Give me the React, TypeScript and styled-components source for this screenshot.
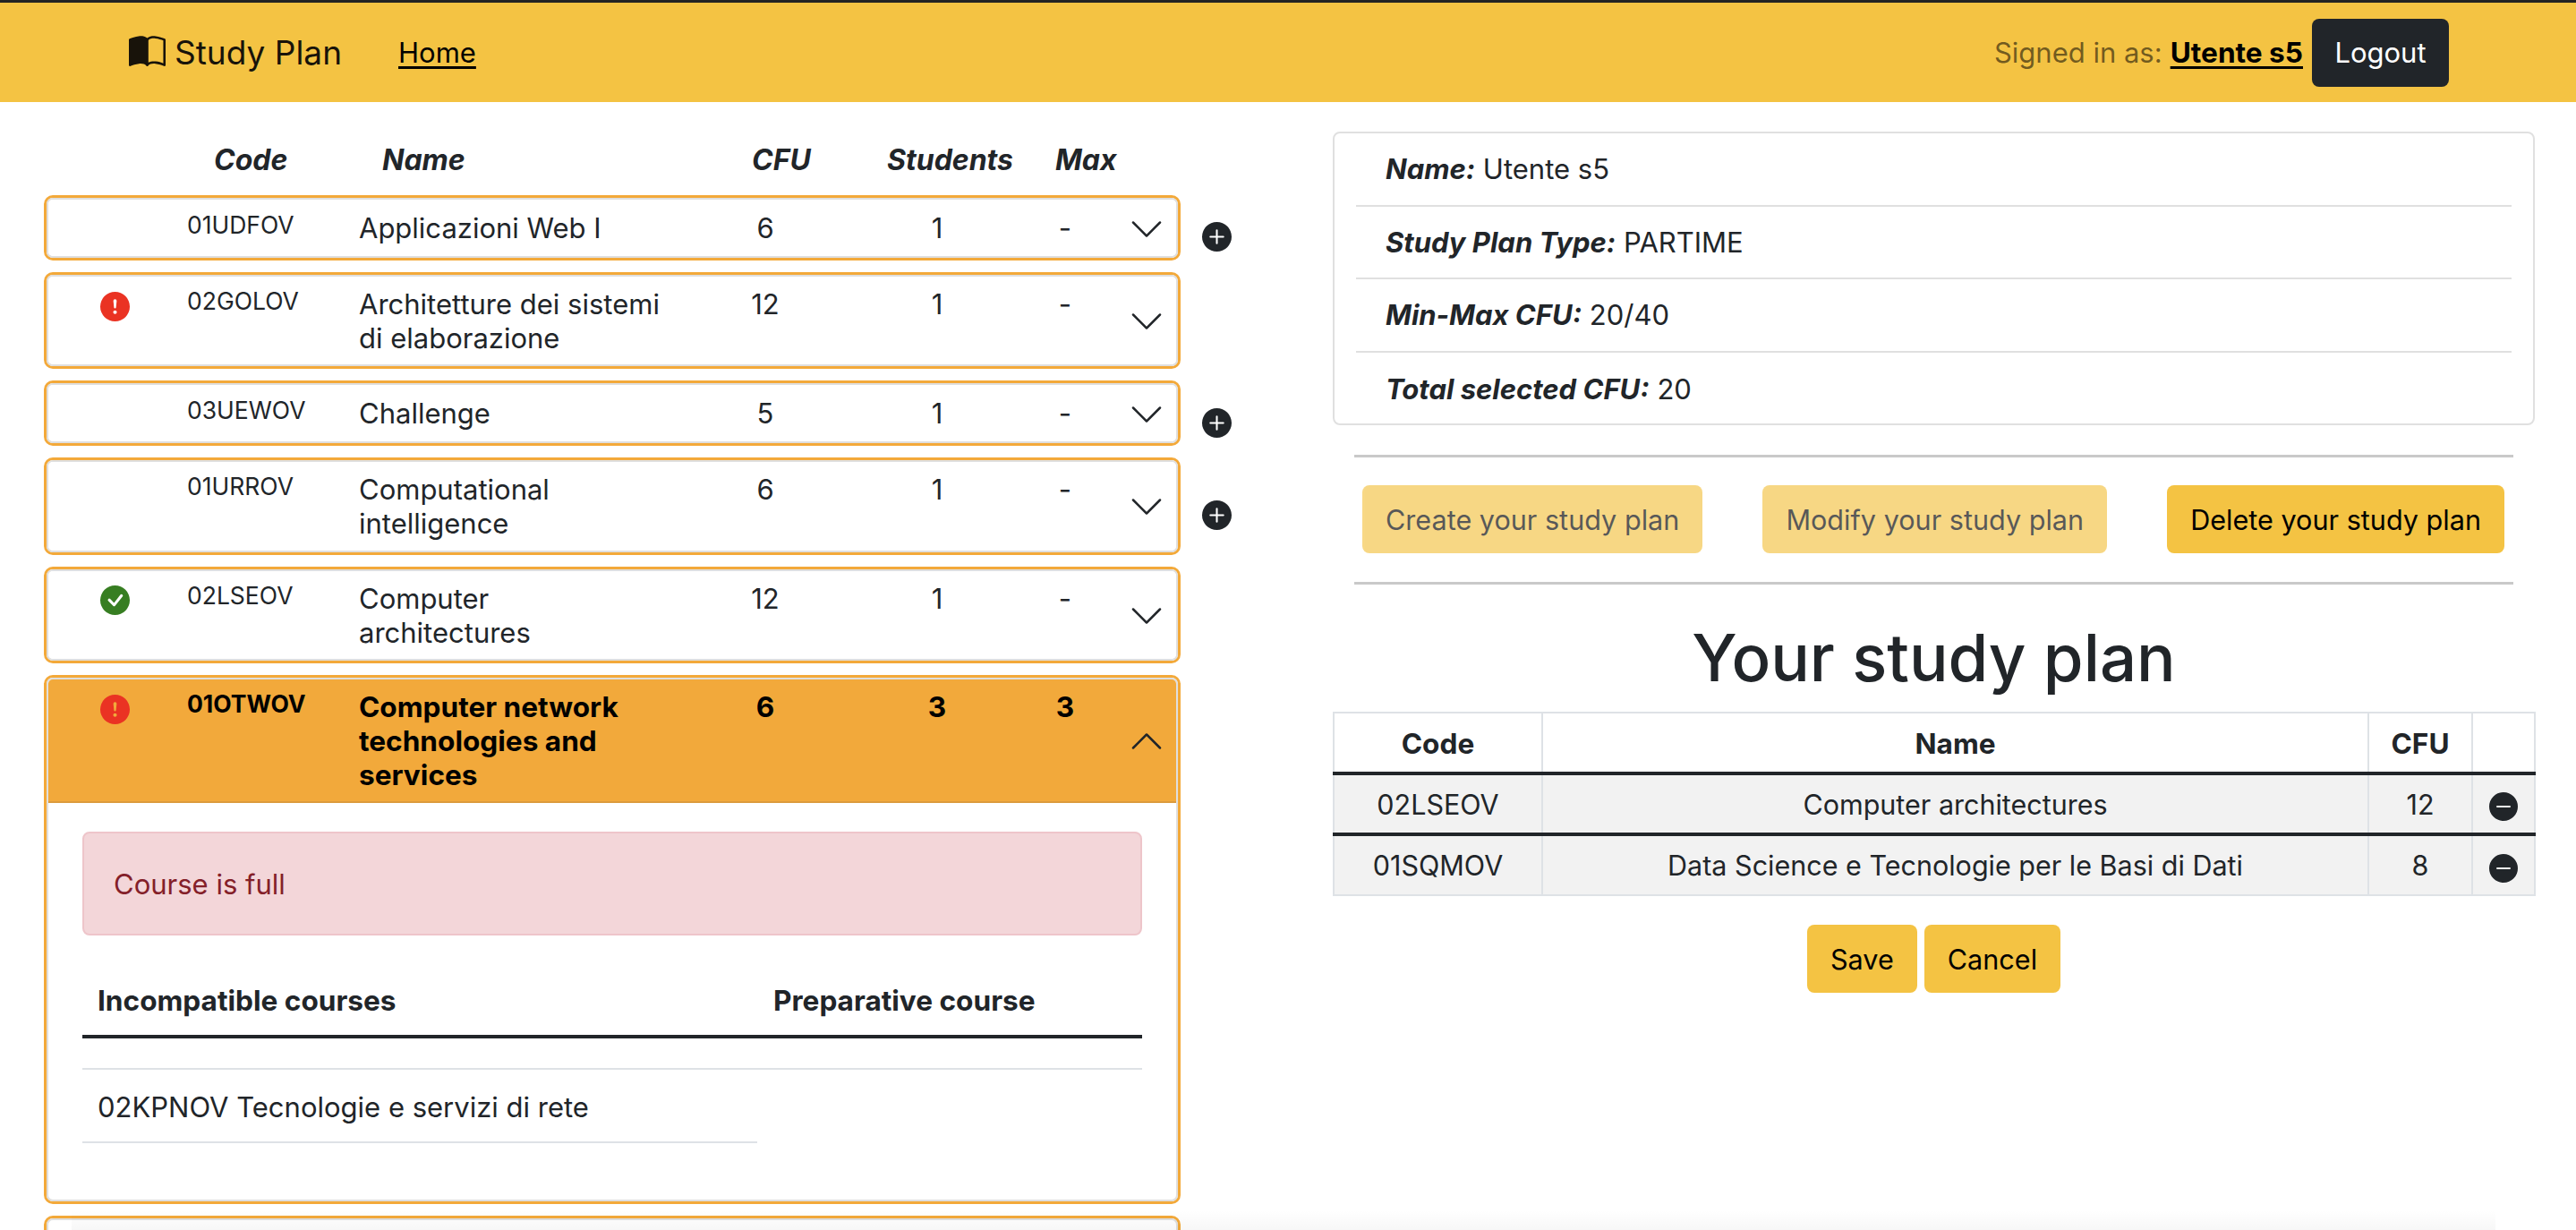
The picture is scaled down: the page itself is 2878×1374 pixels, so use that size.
import React from "react";
import styled, { createGlobalStyle } from "styled-components";
import {
  BsBookHalf,
  BsCheckCircleFill,
  BsChevronDown,
  BsChevronUp,
  BsDashCircleFill,
  BsExclamationCircleFill,
  BsPlusCircleFill,
} from "react-icons/bs";

const Global = createGlobalStyle`
  html, body { margin: 0; padding: 0; background: #fff; }
  body { font-family: Inter, "Liberation Sans", sans-serif; font-size: 31px; color: #212529; }
  * { box-sizing: border-box; }
`;

const Page = styled.div`
  position: relative;
  height: 1374px;
  overflow: hidden;
  background: #fff;
`;

const BottomFade = styled.div`
  position: absolute;
  left: 80px;
  right: 90px;
  bottom: 0;
  height: 22px;
  pointer-events: none;
  background: linear-gradient(to bottom, rgba(0, 0, 0, 0), rgba(0, 0, 0, 0.03));
`;

const Navbar = styled.header`
  display: flex;
  align-items: center;
  height: 114px;
  padding: 0 142px 0 144px;
  border-top: 3px solid #232323;
  background: #f4c343;
`;

const Brand = styled.div`
  display: flex;
  align-items: center;
  gap: 10px;
  font-size: 37px;
  color: #18130a;
  svg { width: 41px; height: 41px; }
`;

const NavLink = styled.a`
  margin-left: 63px;
  color: #000;
  text-decoration: underline;
  text-underline-offset: 4px;
`;

const NavRight = styled.div`
  margin-left: auto;
  display: flex;
  align-items: center;
`;

const SignedIn = styled.span`
  color: rgba(0, 0, 0, 0.55);
`;

const UserLink = styled.a`
  margin-left: 9px;
  color: #000;
  font-size: 31.6px;
  font-weight: 700;
  text-decoration: underline;
  text-underline-offset: 4px;
`;

const LogoutButton = styled.button`
  margin-left: 10px;
  width: 153px;
  height: 76px;
  border: 0;
  border-radius: 8px;
  background: #212529;
  color: #fff;
  font: inherit;
`;

const Main = styled.main`
  display: flex;
  align-items: flex-start;
  padding-left: 49px;
`;

const CourseColumn = styled.section`
  width: 1327px;
  flex: none;
`;

const ListHead = styled.div`
  display: grid;
  grid-template-columns: 188px 413px 151px 188px 80px;
  align-items: center;
  height: 104px;
  padding: 24px 0 0 190px;
  font-size: 32px;
  font-style: italic;
  strong { font-weight: 700; }
`;

const CourseRow = styled.div`
  display: flex;
  align-items: center;
  gap: 24px;
  margin-bottom: 12.8px;
`;

const Card = styled.article`
  width: 1270px;
  flex: none;
  border: 3px solid #f3a93a;
  border-radius: 10px;
  background: #fff;
`;

const CardInner = styled.div`
  border: 2px solid #dfdfdf;
  border-radius: 7px;
  overflow: hidden;
`;

const CourseHead = styled.div<{ $open?: boolean }>`
  display: grid;
  grid-template-columns: 149px 198px 359px 190px 194px 92px 1fr;
  min-height: 62.9px;
  padding: ${(p) => (p.$open ? "12px 0 10px" : "12.5px 0 10.3px")};
  line-height: 38px;
  background: ${(p) => (p.$open ? "#f2a93b" : "#fff")};
  border-bottom: ${(p) => (p.$open ? "2px solid #dc9b3c" : "0")};
  color: ${(p) => (p.$open ? "#000" : "#212529")};
  font-size: ${(p) => (p.$open ? "31.6px" : "31px")};
  font-weight: ${(p) => (p.$open ? 700 : 400)};
`;

const StatusCell = styled.div<{ $ok?: boolean }>`
  display: flex;
  justify-content: center;
  padding-top: ${(p) => (p.$ok ? "3.5px" : "4.5px")};
  color: ${(p) => (p.$ok ? "#377e22" : "#ea3323")};
  svg { width: 33px; height: 33px; }
`;

const CodeCell = styled.div`
  padding-left: 6px;
  font-size: 26.5px;
  line-height: 30px;
`;

const NameCell = styled.div`
  width: 342px;
`;

const ValueCell = styled.div`
  text-align: center;
`;

const ChevronCell = styled.div`
  justify-self: end;
  align-self: center;
  display: flex;
  margin-right: 13px;
  color: #212529;
  svg { width: 40px; height: 40px; }
`;

const AddSlot = styled.div`
  display: flex;
  width: 33px;
  height: 33px;
  margin-top: 21px;
  color: #212529;
  svg { width: 33px; height: 33px; }
`;

const CourseBody = styled.div`
  padding: 32px 38px 63px;
`;

const Alert = styled.div`
  display: flex;
  align-items: center;
  height: 116px;
  padding: 0 33px;
  border: 2px solid #eec5ca;
  border-radius: 8px;
  background: #f3d6d9;
  color: #842029;
`;

const DetailHead = styled.div`
  display: grid;
  grid-template-columns: 755px 1fr;
  align-items: center;
  height: 115px;
  padding: 34px 0 0 17px;
  border-bottom: 4px solid #212529;
  font-size: 31.6px;
  span { font-weight: 700; }
`;

const DetailSpacer = styled.div`
  height: 35px;
  border-bottom: 2px solid #dee2e6;
`;

const DetailItem = styled.div`
  display: flex;
  align-items: center;
  width: 754px;
  height: 82px;
  padding: 2px 0 0 17px;
  border-bottom: 2px solid #dee2e6;
`;

const SideColumn = styled.section`
  width: 1343px;
  margin-left: 113px;
  padding-top: 33px;
`;

const InfoCard = styled.ul`
  list-style: none;
  margin: 0;
  padding: 0 24px;
  height: 328px;
  border: 2px solid #e0e0e0;
  border-radius: 8px;
`;

const InfoItem = styled.li`
  display: flex;
  align-items: center;
  height: 81.6px;
  padding-left: 33px;
  border-bottom: 2px solid #e0e0e0;
  white-space: pre;
  &:last-child { border-bottom: 0; }
  em { font-weight: 700; font-style: italic; }
`;

const Rule = styled.hr`
  height: 3px;
  margin: 0 24px;
  border: 0;
  background: #c9c9c9;
`;

const FirstRule = styled(Rule)`
  margin-top: 33px;
`;

const ActionBar = styled.div`
  display: flex;
  justify-content: space-between;
  margin: 0 24px;
  padding: 31px 10px 32px 9px;
`;

const YellowButton = styled.button<{ $off?: boolean }>`
  height: 76px;
  padding: 0 26px;
  border: 0;
  border-radius: 8px;
  background: #f4c343;
  color: #000;
  font-family: inherit;
  font-size: 30.6px;
  opacity: ${(p) => (p.$off ? 0.65 : 1)};
`;

const Title = styled.h1`
  margin: 0;
  padding-top: 36px;
  height: 142px;
  font-size: 72.5px;
  font-weight: 500;
  line-height: 92px;
  text-align: center;
`;

const PlanTable = styled.table`
  width: 1342px;
  table-layout: fixed;
  border-collapse: collapse;
  text-align: center;
  font-size: 30.5px;
  th, td { border: 2px solid #dee2e6; padding: 0; }
  th { height: 68px; padding-top: 2px; font-size: 31.6px; font-weight: 700; border-bottom: 4px solid #212529; }
  td { height: 68px; background: #f2f2f2; }
  tbody tr:first-child td { border-bottom: 4px solid #212529; }
`;

const RemoveIcon = styled.span`
  display: flex;
  justify-content: center;
  padding-top: 6px;
  color: #212529;
  svg { width: 32px; height: 32px; }
`;

const PlanActions = styled.div`
  display: flex;
  justify-content: center;
  gap: 8px;
  margin-top: 32px;
`;

const NextCardBlank = styled.div`
  min-height: 62.9px;
`;

type Course = {
  code: string;
  name: string;
  cfu: number;
  students: number;
  max: string;
  status?: "ok" | "bad";
  add?: boolean;
};

const courses: Course[] = [
  { code: "01UDFOV", name: "Applicazioni Web I", cfu: 6, students: 1, max: "-", add: true },
  { code: "02GOLOV", name: "Architetture dei sistemi di elaborazione", cfu: 12, students: 1, max: "-", status: "bad" },
  { code: "03UEWOV", name: "Challenge", cfu: 5, students: 1, max: "-", add: true },
  { code: "01URROV", name: "Computational intelligence", cfu: 6, students: 1, max: "-", add: true },
  { code: "02LSEOV", name: "Computer architectures", cfu: 12, students: 1, max: "-", status: "ok" },
];

function HeadCells({ c, open }: { c: Course; open?: boolean }) {
  return (
    <CourseHead $open={open}>
      <StatusCell $ok={c.status === "ok"}>
        {c.status === "ok" && <BsCheckCircleFill />}
        {c.status === "bad" && <BsExclamationCircleFill />}
      </StatusCell>
      <CodeCell>{c.code}</CodeCell>
      <NameCell>{c.name}</NameCell>
      <ValueCell>{c.cfu}</ValueCell>
      <ValueCell>{c.students}</ValueCell>
      <ValueCell>{c.max}</ValueCell>
      <ChevronCell>{open ? <BsChevronUp /> : <BsChevronDown />}</ChevronCell>
    </CourseHead>
  );
}

export default function App() {
  return (
    <Page>
      <Global />
      <Navbar>
        <Brand>
          <BsBookHalf />
          Study Plan
        </Brand>
        <NavLink>Home</NavLink>
        <NavRight>
          <SignedIn>Signed in as:</SignedIn>
          <UserLink>Utente s5</UserLink>
          <LogoutButton>Logout</LogoutButton>
        </NavRight>
      </Navbar>
      <Main>
        <CourseColumn>
          <ListHead>
            <strong>Code</strong>
            <strong>Name</strong>
            <strong>CFU</strong>
            <strong>Students</strong>
            <strong>Max</strong>
          </ListHead>
          {courses.map((c) => (
            <CourseRow key={c.code}>
              <Card>
                <CardInner>
                  <HeadCells c={c} />
                </CardInner>
              </Card>
              {c.add && (
                <AddSlot>
                  <BsPlusCircleFill />
                </AddSlot>
              )}
            </CourseRow>
          ))}
          <CourseRow>
            <Card>
              <CardInner>
                <HeadCells
                  open
                  c={{ code: "01OTWOV", name: "Computer network technologies and services", cfu: 6, students: 3, max: "3", status: "bad" }}
                />
                <CourseBody>
                  <Alert>Course is full</Alert>
                  <DetailHead>
                    <span>Incompatible courses</span>
                    <span>Preparative course</span>
                  </DetailHead>
                  <DetailSpacer />
                  <DetailItem>02KPNOV Tecnologie e servizi di rete</DetailItem>
                </CourseBody>
              </CardInner>
            </Card>
          </CourseRow>
          <CourseRow>
            <Card>
              <CardInner>
                <NextCardBlank />
              </CardInner>
            </Card>
          </CourseRow>
        </CourseColumn>
        <SideColumn>
          <InfoCard>
            <InfoItem><em>Name:</em> Utente s5</InfoItem>
            <InfoItem><em>Study Plan Type:</em> PARTIME</InfoItem>
            <InfoItem><em>Min-Max CFU:</em> 20/40</InfoItem>
            <InfoItem><em>Total selected CFU:</em> 20</InfoItem>
          </InfoCard>
          <FirstRule />
          <ActionBar>
            <YellowButton $off>Create your study plan</YellowButton>
            <YellowButton $off>Modify your study plan</YellowButton>
            <YellowButton>Delete your study plan</YellowButton>
          </ActionBar>
          <Rule />
          <Title>Your study plan</Title>
          <PlanTable>
            <colgroup>
              <col width="233" />
              <col width="923" />
              <col width="116" />
              <col width="70" />
            </colgroup>
            <thead>
              <tr>
                <th>Code</th>
                <th>Name</th>
                <th>CFU</th>
                <th></th>
              </tr>
            </thead>
            <tbody>
              <tr>
                <td>02LSEOV</td>
                <td>Computer architectures</td>
                <td>12</td>
                <td><RemoveIcon><BsDashCircleFill /></RemoveIcon></td>
              </tr>
              <tr>
                <td>01SQMOV</td>
                <td>Data Science e Tecnologie per le Basi di Dati</td>
                <td>8</td>
                <td><RemoveIcon><BsDashCircleFill /></RemoveIcon></td>
              </tr>
            </tbody>
          </PlanTable>
          <PlanActions>
            <YellowButton>Save</YellowButton>
            <YellowButton>Cancel</YellowButton>
          </PlanActions>
        </SideColumn>
      </Main>
      <BottomFade />
    </Page>
  );
}
